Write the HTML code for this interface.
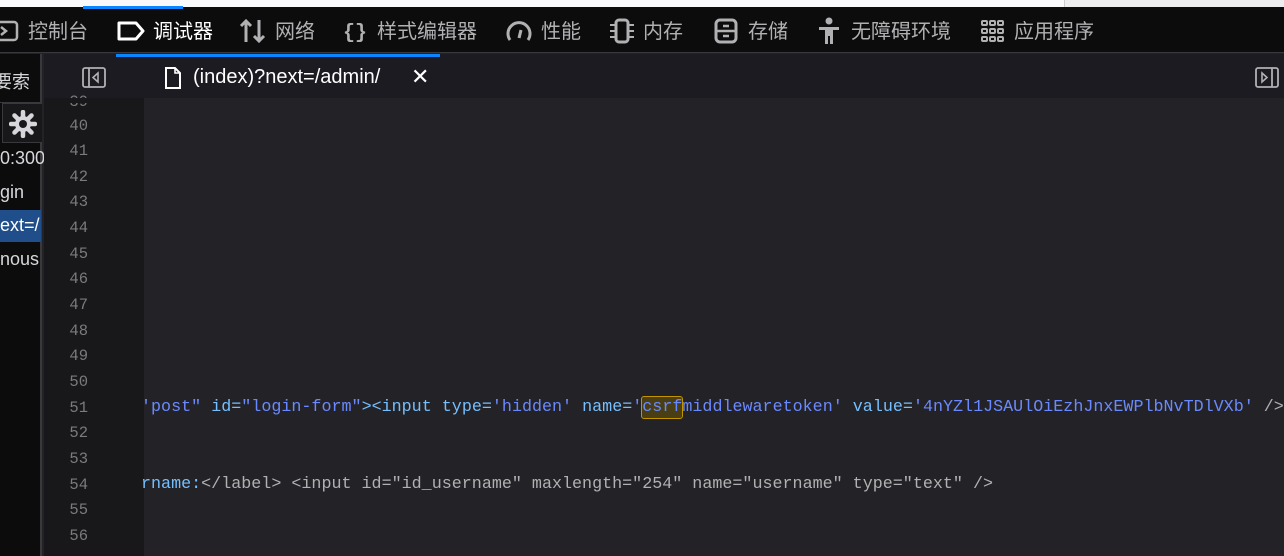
<!DOCTYPE html>
<html><head><meta charset="utf-8"><style>
*{margin:0;padding:0;box-sizing:border-box}
body{width:1284px;height:556px;overflow:hidden;background:#232327;position:relative;font-family:"Liberation Sans","Noto Sans CJK SC",sans-serif;color:#dcdcdc}
.a{position:absolute}
.top{left:0;top:0;width:1284px;height:7px;background:#f9f9fb}
.top2{left:1064px;top:0;width:220px;height:7px;background:#ededf0;border-left:1px solid #ccc}
.tb{left:0;top:7px;width:1284px;height:46px;background:#0c0c0d;border-bottom:1px solid #38383d}
.ti{top:9px;height:46px;line-height:46px;font-size:20px;color:#b1b1b3;white-space:nowrap}
.ti svg{vertical-align:middle;margin-right:8px;position:relative;top:-2px}
.tabs{left:44px;top:54px;width:1240px;height:48px;background:#1c1b22;border-bottom:1px solid #38383d}
.side{left:0;top:54px;width:42px;height:502px;background:#0c0c0d;border-right:2px solid #38383d}
.gut{left:44px;top:103px;width:100px;height:453px;background:#18181a}
.ln{left:44px;width:44px;text-align:right;font-family:"Liberation Mono",monospace;font-size:15.5px;color:#7a7a7f}
.code{left:141px;font-family:"Liberation Mono",monospace;font-size:16.72px;white-space:pre;color:#b1b1b3}
.b{color:#75bfff}.v{color:#6b89ff}.at{color:#75bfff}
</style></head><body>
<div class="a top"></div><div class="a top2"></div>
<div class="a tb"></div>
<div class="a" style="left:83px;top:6px;width:100px;height:3px;background:#0a84ff"></div>
<div class="a ti" style="left:-6px"><svg width="26" height="22"><rect x="1" y="2" width="22" height="18" rx="3" fill="none" stroke="#b1b1b3" stroke-width="2.5"/><path d="M7 7l5 4-5 4" fill="none" stroke="#b1b1b3" stroke-width="2.5"/></svg>控制台</div>
<div class="a ti" style="left:117px;color:#fff"><svg width="28" height="22"><path d="M2 3h17l7 8-7 8H2z" fill="none" stroke="#fff" stroke-width="3" stroke-linejoin="round"/></svg>调试器</div>
<div class="a ti" style="left:239px"><svg width="28" height="26"><path d="M7 24V3M2 8l5-5 5 5M20 2v21M15 18l5 5 5-5" fill="none" stroke="#b1b1b3" stroke-width="3"/></svg>网络</div>
<div class="a ti" style="left:343px"><span style="font-family:'Liberation Mono';font-weight:bold;margin-right:10px">{}</span>样式编辑器</div>
<div class="a ti" style="left:505px"><svg width="28" height="26"><path d="M5 22A11 11 0 1 1 23 22" fill="none" stroke="#b1b1b3" stroke-width="3"/><path d="M14 20l2-8" stroke="#b1b1b3" stroke-width="3"/></svg>性能</div>
<div class="a ti" style="left:609px"><svg width="26" height="26"><rect x="7" y="2" width="12" height="22" rx="3" fill="none" stroke="#b1b1b3" stroke-width="3"/><path d="M1 7h5M1 13h5M1 19h5M20 7h5M20 13h5M20 19h5" stroke="#b1b1b3" stroke-width="2"/></svg>内存</div>
<div class="a ti" style="left:714px"><svg width="26" height="26"><rect x="2" y="2" width="20" height="22" rx="4" fill="none" stroke="#b1b1b3" stroke-width="3"/><path d="M2 13h20M9 8h6M9 18h6" stroke="#b1b1b3" stroke-width="2.5"/></svg>存储</div>
<div class="a ti" style="left:817px"><svg width="26" height="28"><circle cx="12" cy="4" r="3.5" fill="#b1b1b3"/><path d="M2 10h20v3h-6v14h-3v-8h-2v8H8V13H2z" fill="#b1b1b3"/></svg>无障碍环境</div>
<div class="a ti" style="left:980px"><svg width="26" height="26"><g fill="none" stroke="#b1b1b3" stroke-width="2"><rect x="2" y="3" width="5" height="4" rx="1"/><rect x="10" y="3" width="5" height="4" rx="1"/><rect x="18" y="3" width="5" height="4" rx="1"/><rect x="2" y="11" width="5" height="4" rx="1"/><rect x="10" y="11" width="5" height="4" rx="1"/><rect x="18" y="11" width="5" height="4" rx="1"/><rect x="2" y="19" width="5" height="4" rx="1"/><rect x="10" y="19" width="5" height="4" rx="1"/><rect x="18" y="19" width="5" height="4" rx="1"/></g></svg>应用程序</div>

<div class="a side"></div>
<div class="a" style="left:-6px;top:68px;font-size:18px;color:#d7d7db">要索</div>
<div class="a" style="left:0;top:102px;width:42px;height:1px;background:#38383d"></div>
<div class="a" style="left:2px;top:103px;width:40px;height:40px;border:1px solid #38383d;border-right:0;background:#18181a"></div>
<svg class="a" style="left:9px;top:110px" width="28" height="28" viewBox="0 0 28 28"><g stroke="#d7d7db" stroke-width="4.5" stroke-linecap="round"><path d="M14 2v24M2 14h24M5.5 5.5l17 17M22.5 5.5l-17 17"/></g><circle cx="14" cy="14" r="8" fill="#d7d7db"/><circle cx="14" cy="14" r="4" fill="#18181a"/></svg>
<div class="a" style="left:0;top:148px;font-size:18px;color:#d7d7db;white-space:nowrap">0:300</div>
<div class="a" style="left:0;top:182px;font-size:18px;color:#d7d7db">gin</div>
<div class="a" style="left:0;top:210px;width:41px;height:32px;background:#204e8a"></div>
<div class="a" style="left:0;top:215px;font-size:18px;color:#fff;white-space:nowrap;width:41px;overflow:hidden">ext=/</div>
<div class="a" style="left:0;top:249px;font-size:18px;color:#d7d7db;width:41px;overflow:hidden;white-space:nowrap">nous</div>

<div class="a tabs"></div>
<div class="a" style="left:116px;top:54px;width:324px;height:3px;background:#0a84ff"></div>
<svg class="a" style="left:82px;top:67px" width="24" height="22"><rect x="1" y="1" width="22" height="19" rx="2" fill="none" stroke="#b1b1b3" stroke-width="1.8"/><path d="M7 1v19" stroke="#b1b1b3" stroke-width="1.8"/><path d="M16 6l-5 4.5 5 4.5z" fill="none" stroke="#b1b1b3" stroke-width="1.6"/></svg>
<svg class="a" style="left:164px;top:67px" width="18" height="22"><path d="M2 1h9l5 5v15H2z" fill="none" stroke="#fff" stroke-width="2"/><path d="M11 1v5h5" fill="none" stroke="#fff" stroke-width="1.6"/></svg>
<div class="a" style="left:193px;top:66px;font-size:20px;color:#fff">(index)?next=/admin/</div>
<div class="a" style="left:411px;top:64px;font-size:22px;color:#fff">✕</div>
<svg class="a" style="left:1255px;top:67px" width="24" height="22"><rect x="1" y="1" width="22" height="19" rx="2" fill="none" stroke="#b1b1b3" stroke-width="1.8"/><path d="M17 1v19" stroke="#b1b1b3" stroke-width="1.8"/><path d="M7 6l5 4.5-5 4.5z" fill="none" stroke="#b1b1b3" stroke-width="1.6"/></svg>

<div class="a gut"></div>
<div class="a ln" style="top:93px">39</div>
<div class="a ln" style="top:117px">40</div><div class="a ln" style="top:142px">41</div><div class="a ln" style="top:168px">42</div><div class="a ln" style="top:193px">43</div><div class="a ln" style="top:219px">44</div><div class="a ln" style="top:245px">45</div><div class="a ln" style="top:270px">46</div><div class="a ln" style="top:296px">47</div><div class="a ln" style="top:322px">48</div><div class="a ln" style="top:347px">49</div><div class="a ln" style="top:373px">50</div><div class="a ln" style="top:399px">51</div><div class="a ln" style="top:424px">52</div><div class="a ln" style="top:450px">53</div><div class="a ln" style="top:476px">54</div><div class="a ln" style="top:501px">55</div><div class="a ln" style="top:527px">56</div>
<div class="a" style="left:44px;top:98px;width:1240px;height:5px;background:#232327"></div>
<div class="a" style="left:44px;top:98px;width:100px;height:5px;background:#18181a"></div>
<div class="a" style="left:641px;top:396px;width:42px;height:23px;border:1px solid #c39400;border-radius:3px;background:#4a3f14"></div>
<div class="a code" style="top:398px"><span class="v">'post"</span> <span class="at">id=</span><span class="v">"login-form"</span><span class="b">&gt;&lt;input</span> <span class="at">type=</span><span class="v">'hidden'</span> <span class="at">name=</span><span class="v">'csrfmiddlewaretoken'</span> <span class="at">value=</span><span class="v">'4nYZl1JSAUlOiEzhJnxEWPlbNvTDlVXb'</span> /&gt;</div>
<div class="a code" style="top:475px"><span class="b">rname:</span>&lt;/label&gt; &lt;input id="id_username" maxlength="254" name="username" type="text" /&gt;</div>
</body></html>
